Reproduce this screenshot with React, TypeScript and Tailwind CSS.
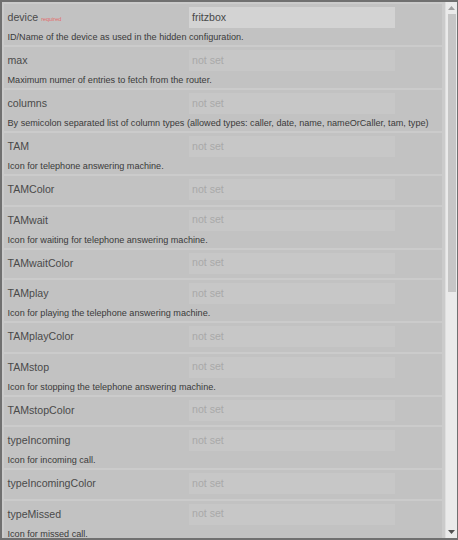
import React from "react";

type Row = { name: string; desc?: string; value?: string; required?: boolean };

const rows: Row[] = [
  { name: "device", desc: "ID/Name of the device as used in the hidden configuration.", value: "fritzbox", required: true },
  { name: "max", desc: "Maximum numer of entries to fetch from the router." },
  { name: "columns", desc: "By semicolon separated list of column types (allowed types: caller, date, name, nameOrCaller, tam, type)" },
  { name: "TAM", desc: "Icon for telephone answering machine." },
  { name: "TAMColor" },
  { name: "TAMwait", desc: "Icon for waiting for telephone answering machine." },
  { name: "TAMwaitColor" },
  { name: "TAMplay", desc: "Icon for playing the telephone answering machine." },
  { name: "TAMplayColor" },
  { name: "TAMstop", desc: "Icon for stopping the telephone answering machine." },
  { name: "TAMstopColor" },
  { name: "typeIncoming", desc: "Icon for incoming call." },
  { name: "typeIncomingColor" },
  { name: "typeMissed", desc: "Icon for missed call." },
];

function RowView({ r }: { r: Row }) {
  return (
    <div
      className={
        "bg-[#c2c2c2] pl-[3.5px] pt-[3px] mb-[2px] " + (r.desc ? "h-[41px]" : "h-[28.5px]")
      }
    >
      <div className="flex items-center h-[21px]">
        <div className="w-[181.5px] flex items-baseline text-[10.6px] text-[#4a4a4a] leading-none">
          <span>{r.name}</span>
          {r.required && <span className="ml-[3px] text-[5.5px] text-[#e26a6a]">required</span>}
        </div>
        <div
          className={
            "w-[206px] h-[21px] flex items-center pl-[3px] text-[10.6px] " +
            (r.value ? "bg-[#d3d3d3] text-[#484848]" : "bg-[#c7c7c7] text-[#a9a9a9]")
          }
        >
          {r.value ?? "not set"}
        </div>
      </div>
      {r.desc && (
        <div className="mt-[3px] text-[9.1px] leading-[13px] text-[#3a3a3a] whitespace-nowrap">{r.desc}</div>
      )}
    </div>
  );
}

export default function App() {
  return (
    <div
      className="w-[458px] h-[540px] overflow-hidden border-t-2 border-b-2 border-l-2 border-r border-[#707070] bg-[#cbcbcb] flex"
      style={{ fontFamily: '"Liberation Sans", Arial, sans-serif' }}
    >
      <div className="w-[440px] shrink-0 h-full overflow-hidden pl-[2px] pt-[2px]">
        {rows.map((r) => (
          <RowView key={r.name} r={r} />
        ))}
      </div>
      <div className="w-[3px] shrink-0" />
      <div className="w-[12px] shrink-0 h-full bg-[#eaeaea] border-l border-[#dedede] flex flex-col items-center">
        <div className="h-[12px] w-full flex items-center justify-center">
          <svg width="7" height="4" viewBox="0 0 7 4">
            <path d="M3.5 0 L7 4 L0 4 Z" fill="#a0a0a0" />
          </svg>
        </div>
        <div className="w-[8px] h-[278px] bg-[#c6c6c6]" />
        <div className="flex-1" />
        <div className="h-[12px] w-full flex items-center justify-center">
          <svg width="7" height="4" viewBox="0 0 7 4">
            <path d="M0 0 L7 0 L3.5 4 Z" fill="#505050" />
          </svg>
        </div>
      </div>
    </div>
  );
}
